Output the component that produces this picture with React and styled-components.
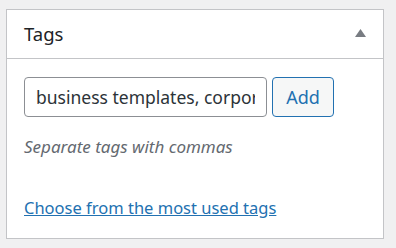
import React from "react";
import styled, { createGlobalStyle } from "styled-components";

const Global = createGlobalStyle`
  html, body { margin: 0; padding: 0; background: #f0f0f1; }
  body { font-family: "Noto Sans", "Open Sans", sans-serif; }
`;

const Page = styled.div`
  padding: 9px 0 0 6px;
`;

const Panel = styled.section`
  box-sizing: border-box;
  width: 378px;
  height: 230px;
  background: #fff;
  border: 1px solid #c3c4c7;
  display: flex;
  flex-direction: column;
`;

const Header = styled.div`
  box-sizing: border-box;
  height: 49px;
  border-bottom: 1px solid #c3c4c7;
  display: flex;
  align-items: center;
  justify-content: space-between;
  padding: 0 17px 0 17px;
`;

const Title = styled.h2`
  margin: 0;
  font-size: 18.5px;
  font-weight: 400;
  color: #1d2327;
  line-height: 1;
`;

const Toggle = styled.button`
  border: 0;
  background: none;
  padding: 0;
  width: 11px;
  height: 8px;
  display: flex;
  cursor: pointer;
  margin-top: -2px;
`;

const Body = styled.div`
  padding: 18px 17px 0 17px;
  display: flex;
  flex-direction: column;
`;

const Row = styled.div`
  display: flex;
  gap: 5px;
`;

const Input = styled.input`
  box-sizing: border-box;
  width: 243px;
  height: 40px;
  border: 1px solid #8c8f94;
  border-radius: 4px;
  padding: 0 11px;
  font-family: inherit;
  font-size: 17.5px;
  color: #2c3338;
  outline: none;
`;

const Button = styled.button`
  box-sizing: border-box;
  width: 62px;
  height: 40px;
  border: 1px solid #2271b1;
  border-radius: 4px;
  background: #f6f7f7;
  color: #2271b1;
  font-family: inherit;
  font-size: 18px;
  padding: 0;
`;

const Hint = styled.p`
  margin: 18px 0 0 0;
  font-size: 17px;
  font-style: italic;
  color: #646970;
  line-height: 24px;
`;

const Link = styled.a`
  margin-top: 37px;
  font-size: 16.5px;
  color: #2271b1;
  text-decoration: underline;
  line-height: 24px;
  align-self: flex-start;
`;

export default function App() {
  return (
    <>
      <Global />
      <Page>
        <Panel>
          <Header>
            <Title>Tags</Title>
            <Toggle aria-label="Toggle panel">
              <svg width="11" height="8" viewBox="0 0 11 8">
                <path d="M5.5 0 L11 8 L0 8 Z" fill="#787c82" />
              </svg>
            </Toggle>
          </Header>
          <Body>
            <Row>
              <Input defaultValue="business templates, corporate templates" />
              <Button>Add</Button>
            </Row>
            <Hint>Separate tags with commas</Hint>
            <Link href="#">Choose from the most used tags</Link>
          </Body>
        </Panel>
      </Page>
    </>
  );
}
